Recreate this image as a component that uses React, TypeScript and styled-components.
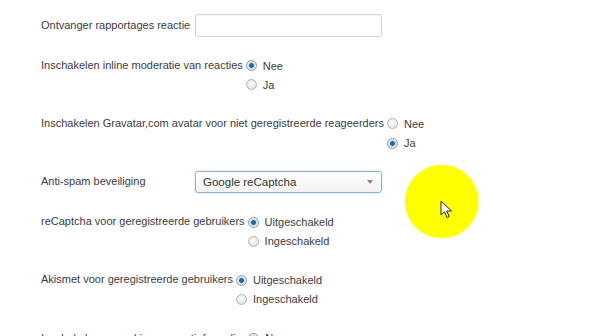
import React from "react";
import styled, { createGlobalStyle } from "styled-components";

const Global = createGlobalStyle`
  html, body { margin: 0; padding: 0; background: #fff; }
  body { font-family: "Liberation Sans", Arial, sans-serif; font-size: 11px; color: #3c3c3c; overflow: hidden; }
`;

const Page = styled.div`
  position: relative;
  width: 600px;
  height: 336px;
  overflow: hidden;
  box-sizing: border-box;
  padding: 15.5px 0 0 41px;
  display: flex;
  flex-direction: column;
  gap: 19.6px;
`;

const Row = styled.div`
  display: flex;
  align-items: flex-start;
`;

const Label = styled.div<{ $fixed?: boolean }>`
  box-sizing: border-box;
  min-width: ${(p) => (p.$fixed ? "154px" : "0")};
  padding-right: 3px;
  line-height: 19.25px;
  white-space: nowrap;
`;

const TextInput = styled.div`
  box-sizing: border-box;
  width: 187px;
  height: 23px;
  margin-top: -2px;
  border: 1px solid #d2d2d2;
  border-radius: 3px;
  background: #fff;
  box-shadow: inset 0 1px 1px rgba(0, 0, 0, 0.04);
`;

const Select = styled.div`
  box-sizing: border-box;
  width: 187px;
  height: 22px;
  margin-top: -1.5px;
  border: 1px solid #8fb0dd;
  border-radius: 3px;
  background: linear-gradient(#ffffff, #f3f3f3);
  box-shadow: 0 0 2px rgba(82, 140, 215, 0.45);
  display: flex;
  align-items: center;
  justify-content: space-between;
  padding: 0 8px 0 7px;
  color: #333;
  font-size: 11.5px;
`;

const Caret = styled.span`
  width: 0;
  height: 0;
  border-left: 3px solid transparent;
  border-right: 3px solid transparent;
  border-top: 4px solid #888;
`;

const Options = styled.div`
  display: flex;
  flex-direction: column;
`;

const Option = styled.div`
  display: flex;
  align-items: center;
  height: 19.25px;
  gap: 6px;
`;

const Radio = styled.span<{ $checked?: boolean }>`
  box-sizing: border-box;
  width: 11px;
  height: 11px;
  border-radius: 50%;
  border: 1px solid ${(p) => (p.$checked ? "#8e9aa6" : "#b3b3b3")};
  background: ${(p) =>
    p.$checked
      ? "radial-gradient(circle at 50% 50%, #1a6aa8 0, #1a6aa8 2px, #9fc2dc 2.6px, #e9eef2 3.4px, #d6d6d6 100%)"
      : "radial-gradient(circle at 50% 40%, #fafafa 0, #ececec 55%, #cfcfcf 100%)"};
  flex: none;
`;

const Highlight = styled.div`
  position: absolute;
  left: 405px;
  top: 165px;
  width: 73px;
  height: 73px;
  border-radius: 50%;
  background: #ffff00;
  box-shadow: 0 0 2px #ffff40;
`;

const Cursor = styled.svg`
  position: absolute;
  left: 440px;
  top: 200px;
`;

type Opt = { text: string; checked?: boolean };

const RadioRow = ({ label, options }: { label: string; options: Opt[] }) => (
  <Row>
    <Label>{label}</Label>
    <Options>
      {options.map((o) => (
        <Option key={o.text}>
          <Radio $checked={o.checked} />
          <span>{o.text}</span>
        </Option>
      ))}
    </Options>
  </Row>
);

export default function App() {
  return (
    <>
      <Global />
      <Page>
        <Row>
          <Label $fixed>Ontvanger rapportages reactie</Label>
          <TextInput />
        </Row>
        <RadioRow
          label="Inschakelen inline moderatie van reacties"
          options={[{ text: "Nee", checked: true }, { text: "Ja" }]}
        />
        <RadioRow
          label="Inschakelen Gravatar,com avatar voor niet geregistreerde reageerders"
          options={[{ text: "Nee" }, { text: "Ja", checked: true }]}
        />
        <Row>
          <Label $fixed>Anti-spam beveiliging</Label>
          <Select>
            <span>Google reCaptcha</span>
            <Caret />
          </Select>
        </Row>
        <RadioRow
          label="reCaptcha voor geregistreerde gebruikers"
          options={[{ text: "Uitgeschakeld", checked: true }, { text: "Ingeschakeld" }]}
        />
        <RadioRow
          label="Akismet voor geregistreerde gebruikers"
          options={[{ text: "Uitgeschakeld", checked: true }, { text: "Ingeschakeld" }]}
        />
        <RadioRow
          label="Inschakelen opmerkingen reactieformulier"
          options={[{ text: "Nee", checked: true }, { text: "Ja" }]}
        />
        <Highlight />
        <Cursor width="14" height="20" viewBox="0 0 14 20">
          <path
            d="M1 1 L1 15 L4.5 11.8 L7 17.5 L9.2 16.5 L6.8 11 L11.5 11 Z"
            fill="#fff"
            stroke="#222"
            strokeWidth="1"
            strokeLinejoin="round"
          />
        </Cursor>
      </Page>
    </>
  );
}
